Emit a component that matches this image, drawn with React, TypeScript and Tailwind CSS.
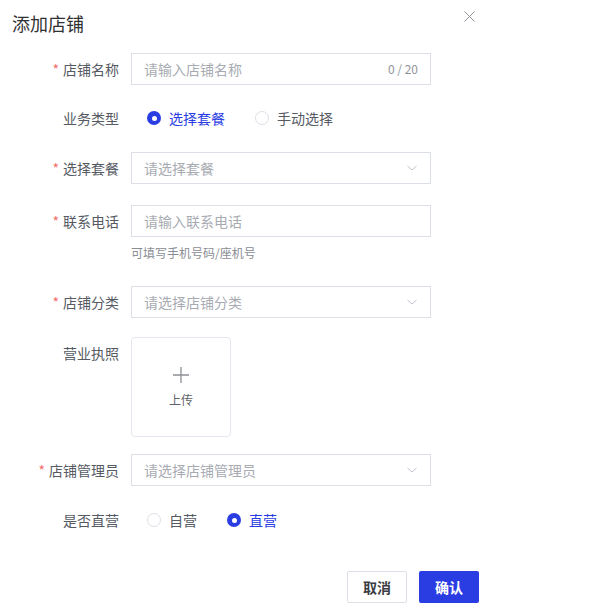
import { useState } from "react";

const font = { fontFamily: '"Noto Sans CJK SC", "Noto Sans", sans-serif' };

function Label({ text, required }: { text: string; required?: boolean }) {
  return (
    <div className="w-[131px] shrink-0 pr-3 text-right text-[14px] leading-[32px] text-[#555a63]">
      {required && <span className="mr-1 text-[#f56c6c]">*</span>}
      {text}
    </div>
  );
}

function Chevron() {
  return (
    <svg width="12" height="12" viewBox="0 0 12 12" className="text-[#c0c4cc]">
      <path d="M1.5 4 L6 8 L10.5 4" fill="none" stroke="currentColor" strokeWidth="1" />
    </svg>
  );
}

function Select({ placeholder }: { placeholder: string }) {
  return (
    <div className="flex h-[32px] w-[300px] items-center justify-between border border-[#dcdfe6] pl-3 pr-3 text-[14px] text-[#a8abb2]">
      <span>{placeholder}</span>
      <Chevron />
    </div>
  );
}

function Radio({ label, checked, onClick }: { label: string; checked: boolean; onClick: () => void }) {
  return (
    <button type="button" onClick={onClick} className="flex items-center gap-2 text-[14px]">
      {checked ? (
        <span className="flex size-[14px] items-center justify-center rounded-full bg-[#2a3de3]">
          <span className="size-[5px] rounded-full bg-white" />
        </span>
      ) : (
        <span className="size-[14px] rounded-full border border-[#dcdfe6] bg-white" />
      )}
      <span className={checked ? "text-[#2a3de3]" : "text-[#555a63]"}>{label}</span>
    </button>
  );
}

export default function App() {
  const [bizType, setBizType] = useState("package");
  const [direct, setDirect] = useState(true);

  return (
    <div className="relative h-[614px] w-[593px] bg-white" style={font}>
      <div className="px-3 pt-[11px] text-[18px] leading-[24px] text-[#303133]">添加店铺</div>
      <button type="button" className="absolute left-[463px] top-[10px] text-[#909399]">
        <svg width="13" height="13" viewBox="0 0 13 13">
          <path d="M1.5 1.5 L11.5 11.5 M11.5 1.5 L1.5 11.5" stroke="currentColor" strokeWidth="1" />
        </svg>
      </button>

      <div className="flex flex-col pt-[18px]">
        <div className="flex">
          <Label text="店铺名称" required />
          <div className="flex h-[32px] w-[300px] items-center justify-between border border-[#dcdfe6] px-3 text-[14px]">
            <span className="text-[#a8abb2]">请输入店铺名称</span>
            <span className="text-[12px] text-[#909399]">0 / 20</span>
          </div>
        </div>

        <div className="mt-[17px] flex">
          <Label text="业务类型" />
          <div className="flex h-[32px] items-center gap-[30px] pl-4">
            <Radio label="选择套餐" checked={bizType === "package"} onClick={() => setBizType("package")} />
            <Radio label="手动选择" checked={bizType === "manual"} onClick={() => setBizType("manual")} />
          </div>
        </div>

        <div className="mt-[18px] flex">
          <Label text="选择套餐" required />
          <Select placeholder="请选择套餐" />
        </div>

        <div className="mt-[21px] flex">
          <Label text="联系电话" required />
          <div>
            <div className="flex h-[32px] w-[300px] items-center border border-[#dcdfe6] px-3 text-[14px] text-[#a8abb2]">
              请输入联系电话
            </div>
            <div className="mt-[7px] text-[12px] leading-[18px] text-[#8a8d94]">可填写手机号码/座机号</div>
          </div>
        </div>

        <div className="mt-[24px] flex">
          <Label text="店铺分类" required />
          <Select placeholder="请选择店铺分类" />
        </div>

        <div className="mt-[19px] flex">
          <Label text="营业执照" />
          <div className="flex size-[100px] flex-col items-center justify-center gap-[8px] rounded-[4px] border border-[#e4e7ed] text-[#8c8f96]">
            <svg width="18" height="18" viewBox="0 0 18 18">
              <path d="M9 1 V17 M1 9 H17" stroke="currentColor" strokeWidth="1.3" />
            </svg>
            <span className="text-[12px] leading-[16px] text-[#606266]">上传</span>
          </div>
        </div>

        <div className="mt-[17px] flex">
          <Label text="店铺管理员" required />
          <Select placeholder="请选择店铺管理员" />
        </div>

        <div className="mt-[18px] flex">
          <Label text="是否直营" />
          <div className="flex h-[32px] items-center gap-[30px] pl-4">
            <Radio label="自营" checked={!direct} onClick={() => setDirect(false)} />
            <Radio label="直营" checked={direct} onClick={() => setDirect(true)} />
          </div>
        </div>
      </div>

      <div className="mt-[35px] flex w-[479px] justify-end gap-3">
        <button
          type="button"
          className="h-[32px] w-[60px] rounded-[2px] border border-[#dcdfe6] text-[14px] font-bold text-[#3a3d44]"
        >
          取消
        </button>
        <button
          type="button"
          className="h-[32px] w-[60px] rounded-[2px] bg-[#2a3de3] text-[14px] font-bold text-white"
        >
          确认
        </button>
      </div>
    </div>
  );
}
